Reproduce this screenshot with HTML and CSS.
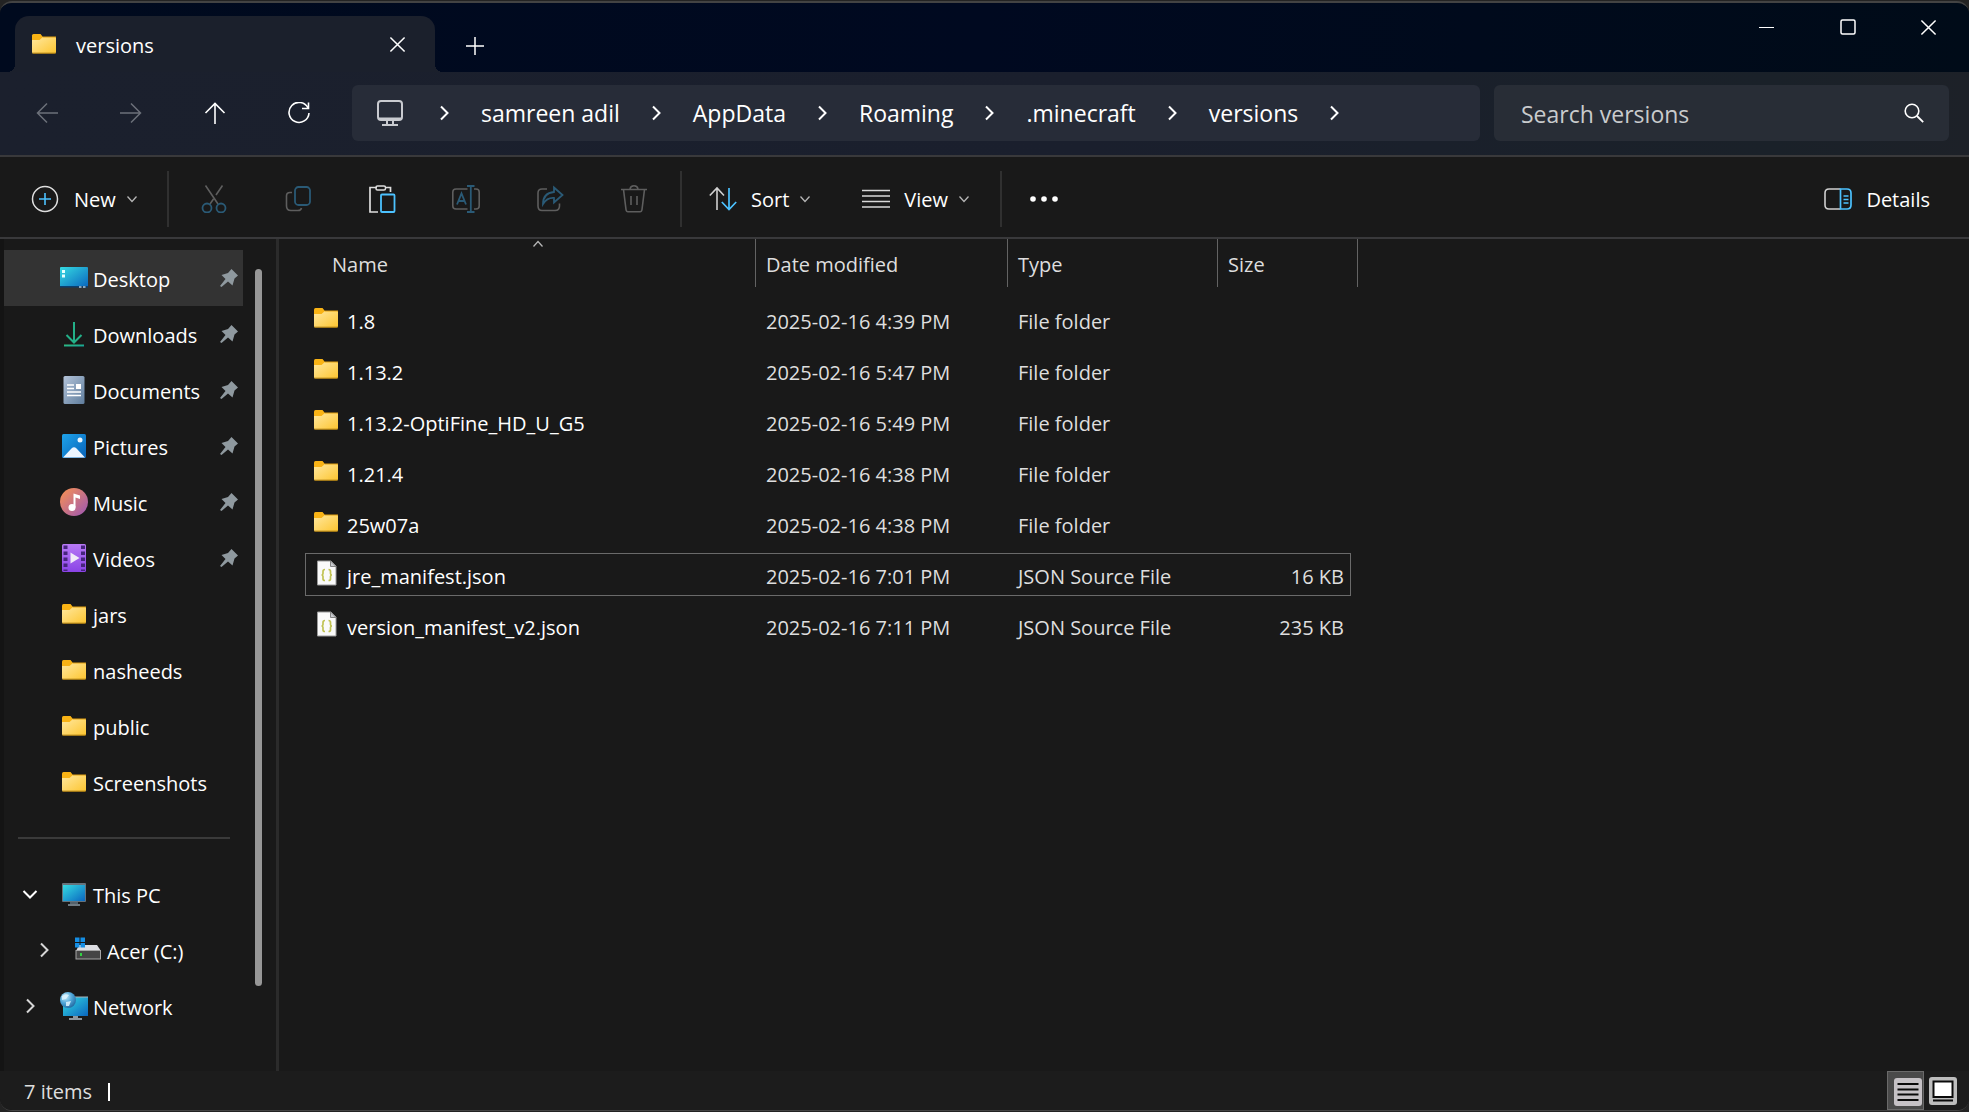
FILE: index.html
```html
<!DOCTYPE html>
<html lang="en">
<head>
<meta charset="utf-8">
<title>versions</title>
<link rel="stylesheet" href="styles.css">
</head>
<body>
<svg class="sprite" aria-hidden="true">
  <defs>
    <linearGradient id="gFolder" x1="0" y1="0" x2="1" y2="1"><stop offset="0" stop-color="#ffe8a0"/><stop offset="1" stop-color="#fdc52f"/></linearGradient>
    <linearGradient id="gScreen" x1="0" y1="0" x2="1" y2="1"><stop offset="0" stop-color="#35dbe2"/><stop offset="1" stop-color="#0a66bf"/></linearGradient>
    <linearGradient id="gDown" x1="0" y1="0" x2="1" y2="1"><stop offset="0" stop-color="#35c07f"/><stop offset="1" stop-color="#0fa09a"/></linearGradient>
    <linearGradient id="gDoc" x1="0" y1="0" x2="1" y2="1"><stop offset="0" stop-color="#b4c4da"/><stop offset="1" stop-color="#5f7d9c"/></linearGradient>
    <linearGradient id="gPic" x1="0" y1="0" x2="1" y2="1"><stop offset="0" stop-color="#1ea3ea"/><stop offset="1" stop-color="#0862b8"/></linearGradient>
    <linearGradient id="gMusic" x1="0" y1="0" x2="1" y2="1"><stop offset="0" stop-color="#fb9350"/><stop offset="1" stop-color="#9b55b5"/></linearGradient>
    <linearGradient id="gVideo" x1="0" y1="0" x2="0" y2="1"><stop offset="0" stop-color="#b87af5"/><stop offset="1" stop-color="#8a43e6"/></linearGradient>
    <radialGradient id="gGlobe" cx=".35" cy=".3" r=".8"><stop offset="0" stop-color="#c5ecfb"/><stop offset=".5" stop-color="#4fa6d8"/><stop offset="1" stop-color="#1c5f98"/></radialGradient>
  </defs>
  <symbol id="folder" viewBox="0 0 28 28"><path d="M2 5.500Q2 4 3.500 4H10.500L13 7V12H2Z" fill="#f9b315"/><path d="M2 10H9.500L13 7H25.500Q26 7 26 8V22Q26 23.500 24.500 23.500H3.500Q2 23.500 2 22Z" fill="url(#gFolder)"/><path d="M13 7H26" stroke="#e2a011"/><path d="M2.500 23.200H25.500" stroke="#a8790e" stroke-width="1"/></symbol>
  <symbol id="desktop" viewBox="0 0 28 28"><rect y="3" width="28" height="20" rx="1" fill="url(#gScreen)"/><path d="M0 22H28V23.500H0Z" fill="#0b3f70"/><path d="M2 6h3v3H2zM2 10.500h3v3H2z" fill="#e5ffff"/><path d="M19 22h2.500v2H19zM23 22h2.500v2H23z" fill="#8aa6bd"/></symbol>
  <symbol id="downloads" viewBox="0 0 28 28"><path d="M14 2V21M6.500 15L14 22.500L21.500 15" fill="none" stroke="#23b088" stroke-width="2"/><path d="M4 24.500H24V26.500H4Z" fill="url(#gDown)"/></symbol>
  <symbol id="documents" viewBox="0 0 28 28"><rect x="3.500" width="21" height="28" rx="1.500" fill="url(#gDoc)"/><path d="M7 9h7M7 12.500h7M7 16h14M7 19.500h14" stroke="#fff" stroke-width="1.500"/><path d="M16 8h5v5h-5z" fill="#fff"/></symbol>
  <symbol id="pictures" viewBox="0 0 28 28"><rect x="2" y="2" width="24" height="24" rx="1.500" fill="url(#gPic)"/><circle cx="20" cy="8" r="2.500" fill="#e9f6ff"/><path d="M3 25.500L11.500 16.500Q14 14 16.500 16.500L25 25.500Z" fill="#edf5ff"/></symbol>
  <symbol id="music" viewBox="0 0 28 28"><circle cx="14" cy="14" r="14" fill="url(#gMusic)"/><circle cx="12" cy="19.500" r="3.500" fill="#fff"/><path d="M13.500 5.500L20 7.500V11L15.500 9.500V19.500H13.500Z" fill="#fff"/></symbol>
  <symbol id="videos" viewBox="0 0 28 28"><rect x="2" width="24" height="28" rx="1.500" fill="url(#gVideo)"/><path d="M5.500 1.500V27M23 1.500V27" stroke="#46247c" stroke-width="4" stroke-dasharray="3.500 2.500"/><path d="M10.500 8.500L19.500 14L10.500 19.500Z" fill="#f1eaf8"/></symbol>
  <symbol id="thispc" viewBox="0 0 28 28"><path d="M10 20h8v4h-8z" fill="#53616b"/><path d="M8 24h12v2H8z" fill="#6f7a82"/><rect x="2" y="3" width="24" height="19" rx="1" fill="#66727b"/><rect x="3" y="5" width="22" height="16" fill="url(#gScreen)"/></symbol>
  <symbol id="drive" viewBox="0 0 28 28"><path d="M5 9H23L27 15H2Z" fill="#dcdde2"/><rect x="2" y="14.500" width="24.500" height="8.500" fill="#454545" stroke="#a6a6a6"/><rect x="6" y="17" width="2" height="3" fill="#32d243"/><path d="M1 1.500h4.500V6H1zM6.500 1.500H11V6H6.500zM1 7h4.500v4.500H1zM6.500 7H11v4.500H6.500z" fill="#158ee4"/></symbol>
  <symbol id="network" viewBox="0 0 28 28"><path d="M13 22h5v4h-5zM9 26h13v2H9z" fill="#8d979e"/><rect x="3" y="5" width="25" height="19" fill="url(#gScreen)"/><path d="M3 5H28" stroke="#abb5bb"/><circle cx="8" cy="8" r="8" fill="url(#gGlobe)"/><path d="M2 4Q5 1 9 3L6 7L2 8ZM6 10L11 9L9 14L6 14Z" fill="#dff5ff" opacity=".85"/></symbol>
  <symbol id="pin" viewBox="0 0 18 18"><path d="M11.500 0L18 6.500L14.500 9.500L12.500 16.500L8 12.500L1.500 18L0 17L5.500 10L1.500 6L8 4Z" fill="#8f999f"/></symbol>
  <symbol id="json" viewBox="0 0 28 28"><path d="M5.500 2H19L24 7V26H5.500Z" fill="#fafafa" stroke="#9a9a9a"/><path d="M18.500 2V7.500H24Z" fill="#c9ccd0" stroke="#858585"/><path d="M13 10.500Q11 10.500 11 12.500V14.500Q11 16 9.500 16Q11 16 11 17.500V20Q11 21.500 13 21.500M16.500 10.500Q18.500 10.500 18.500 12.500V14.500Q18.500 16 20 16Q18.500 16 18.500 17.500V20Q18.500 21.500 16.500 21.500" fill="none" stroke="#c0c253" stroke-width="1.700"/></symbol>
  <symbol id="chev" viewBox="0 0 16 16"><path d="M5 1.500L11.500 8L5 14.500" fill="none" stroke="currentColor" stroke-width="2"/></symbol>
  <symbol id="caret" viewBox="0 0 12 12"><path d="M1.500 3.500L6 8.500L10.500 3.500" fill="none" stroke="currentColor" stroke-width="1.300"/></symbol>
  <symbol id="x" viewBox="0 0 18 18"><path d="M1.500 1.500L16.500 16.500M16.500 1.500L1.500 16.500" stroke="currentColor" stroke-width="1.600"/></symbol>
</svg>

<div class="window">
  <header class="titlebar">
    <div class="tab">
      <svg class="ico"><use href="#folder"/></svg>
      <span class="tab-title">versions</span>
      <button class="tab-close" aria-label="Close tab"><svg width="17" height="17"><use href="#x"/></svg></button>
    </div>
    <button class="tab-new" aria-label="New tab"><svg width="18" height="18" viewBox="0 0 18 18"><path d="M9 0V18M0 9H18" stroke="currentColor" stroke-width="1.500"/></svg></button>
    <div class="controls">
      <button aria-label="Minimize"><svg width="16" height="16" viewBox="0 0 16 16"><path d="M0 8.500H15" stroke="currentColor"/></svg></button>
      <button aria-label="Maximize"><svg width="16" height="16" viewBox="0 0 16 16"><rect x="1" y="1" width="14" height="14" rx="1.500" fill="none" stroke="currentColor" stroke-width="1.500"/></svg></button>
      <button aria-label="Close"><svg width="17" height="17"><use href="#x"/></svg></button>
    </div>
  </header>

  <div class="navbar">
    <div class="nav-buttons">
      <button disabled aria-label="Back"><svg width="22" height="22" viewBox="0 0 22 22"><path d="M22 11H1.500M11 1.500L1.500 11L11 20.500" fill="none" stroke="currentColor" stroke-width="1.500"/></svg></button>
      <button disabled aria-label="Forward"><svg width="22" height="22" viewBox="0 0 22 22"><path d="M0 11H20.500M11 1.500L20.500 11L11 20.500" fill="none" stroke="currentColor" stroke-width="1.500"/></svg></button>
      <button aria-label="Up"><svg width="22" height="22" viewBox="0 0 22 22"><path d="M11 22V1.500M1.500 11L11 1.500L20.500 11" fill="none" stroke="currentColor" stroke-width="1.600"/></svg></button>
      <button aria-label="Refresh"><svg width="22" height="22" viewBox="0 0 22 22"><path d="M20 6A10 10 0 1 0 21 11M20.500 0.500V6.500H14" fill="none" stroke="currentColor" stroke-width="1.600"/></svg></button>
    </div>
    <nav class="address" aria-label="Address">
      <svg class="monitor" width="28" height="28" viewBox="0 0 28 28"><rect x="2" y="2" width="24" height="19" rx="3" fill="none" stroke="currentColor" stroke-width="2"/><path d="M3 19.500H25M11 21V25M17 21V25M6 26H22" stroke="currentColor" stroke-width="2"/></svg>
      <svg class="sep"><use href="#chev"/></svg><a href="#">samreen adil</a>
      <svg class="sep"><use href="#chev"/></svg><a href="#">AppData</a>
      <svg class="sep"><use href="#chev"/></svg><a href="#">Roaming</a>
      <svg class="sep"><use href="#chev"/></svg><a href="#">.minecraft</a>
      <svg class="sep"><use href="#chev"/></svg><a href="#">versions</a>
      <svg class="sep"><use href="#chev"/></svg>
    </nav>
    <label class="search">
      <input type="text" placeholder="Search versions" aria-label="Search versions">
      <svg width="20" height="20" viewBox="0 0 20 20"><circle cx="8" cy="8" r="6.800" fill="none" stroke="currentColor" stroke-width="1.600"/><path d="M13 13L19.200 19.200" stroke="currentColor" stroke-width="1.800"/></svg>
    </label>
  </div>

  <div class="toolbar">
    <button class="cmd cmd-new"><svg width="28" height="28" viewBox="0 0 28 28"><circle cx="14" cy="14" r="12.500" fill="none" stroke="#dedede" stroke-width="1.500"/><path d="M14 8V20M8 14H20" stroke="#4cc2ff" stroke-width="1.600"/></svg><span>New</span><svg class="caret"><use href="#caret"/></svg></button>
    <div class="group">
      <button class="tool" disabled aria-label="Cut"><svg viewBox="0 0 28 28"><path d="M5.500 0.500L18 19M22.500 0.500L16 10M13.500 14L10 19" fill="none" stroke="#5e5e5e" stroke-width="1.600"/><circle cx="7" cy="23" r="4.500" fill="none" stroke="#2a5a76" stroke-width="1.800"/><circle cx="21" cy="23" r="4.500" fill="none" stroke="#2a5a76" stroke-width="1.800"/></svg></button>
      <button class="tool" disabled aria-label="Copy"><svg viewBox="0 0 28 28"><rect x="11" y="2" width="15" height="18" rx="3.500" fill="none" stroke="#2a5a76" stroke-width="1.800"/><path d="M8 7.500H6Q2.500 7.500 2.500 11V21Q2.500 25.500 7 25.500H14Q17 25.500 17.500 23" fill="none" stroke="#5e5e5e" stroke-width="1.600"/></svg></button>
      <button class="tool" aria-label="Paste"><svg viewBox="0 0 28 28"><path d="M9 2.500H2V27H10M18 2.500H22.500V7" fill="none" stroke="#dedede" stroke-width="1.700"/><rect x="8" y="1" width="9.500" height="4" rx="1.500" fill="none" stroke="#dedede" stroke-width="1.500"/><rect x="13" y="9.500" width="13.500" height="17.500" rx="1" fill="none" stroke="#4cc2ff" stroke-width="1.800"/></svg></button>
      <button class="tool" disabled aria-label="Rename"><svg viewBox="0 0 28 28"><path d="M15.500 4H4Q.8 4 .8 7V21Q.8 24 4 24H15.500M22 4H24Q27.200 4 27.200 7V21Q27.200 24 24 24H22" fill="none" stroke="#5e5e5e" stroke-width="1.600"/><path d="M18.800 1V27M15 1H22.500M15 27H22.500M5 19.500L9.500 8.500L14 19.500M6.500 16H12.500" fill="none" stroke="#2a5a76" stroke-width="1.800"/></svg></button>
      <button class="tool" disabled aria-label="Share"><svg viewBox="0 0 28 28"><path d="M11 4H6Q2 4 2 8V21Q2 25.500 6 25.500H19Q23.500 25.500 23.500 21V18.500" fill="none" stroke="#5e5e5e" stroke-width="1.600"/><path d="M18 2.500L26.500 10L18 17.500V13Q11 12.500 7 19Q7 8 18 7Z" fill="none" stroke="#2a5a76" stroke-width="1.800"/></svg></button>
      <button class="tool" disabled aria-label="Delete"><svg viewBox="0 0 28 28"><path d="M1 4.500H27M3.500 4.500L6 24.500Q6.300 26.800 8 26.800H20Q21.700 26.800 22 24.500L24.500 4.500M10 4Q10.500 .8 14 .8T18 4M11 11V20M17 11V20" fill="none" stroke="#5e5e5e" stroke-width="1.600"/></svg></button>
    </div>
    <div class="group group-view">
      <button class="cmd cmd-sort"><svg width="28" height="28" viewBox="0 0 28 28"><path d="M8 25V3M.8 10.500L8 3L15 10.500" fill="none" stroke="#d0d0d0" stroke-width="1.600"/><path d="M20 3V24.500M12.800 17L20 24.500L27.200 17" fill="none" stroke="#4cc2ff" stroke-width="1.700"/></svg><span>Sort</span><svg class="caret"><use href="#caret"/></svg></button>
      <button class="cmd cmd-view"><svg width="28" height="28" viewBox="0 0 28 28"><path d="M0 5.500H28M0 11H28M0 16.500H28M0 22H28" stroke="#d8d8d8" stroke-width="1.600"/></svg><span>View</span><svg class="caret"><use href="#caret"/></svg></button>
    </div>
    <button class="more" aria-label="See more"><svg width="28" height="8" viewBox="0 0 28 8"><circle cx="3" cy="4" r="2.800" fill="#fff"/><circle cx="14" cy="4" r="2.800" fill="#fff"/><circle cx="25" cy="4" r="2.800" fill="#fff"/></svg></button>
    <button class="cmd cmd-details"><svg width="28" height="22" viewBox="0 0 28 22"><path d="M16.500 1H5Q1 1 1 5V17Q1 21 5 21H16.500" fill="none" stroke="#d0d0d0" stroke-width="1.600"/><path d="M16.500 1H23Q27 1 27 5V17Q27 21 23 21H16.500ZM19.500 8H24.500M19.500 11.500H24.500M19.500 15H24.500" fill="none" stroke="#4cc2ff" stroke-width="1.700"/></svg><span>Details</span></button>
  </div>

  <div class="body">
    <nav class="sidebar" aria-label="Folders">
      <ul class="tree">
        <li><a href="#" class="active"><svg class="ico"><use href="#desktop"/></svg><span>Desktop</span><svg class="pin"><use href="#pin"/></svg></a></li>
        <li><a href="#"><svg class="ico"><use href="#downloads"/></svg><span>Downloads</span><svg class="pin"><use href="#pin"/></svg></a></li>
        <li><a href="#"><svg class="ico"><use href="#documents"/></svg><span>Documents</span><svg class="pin"><use href="#pin"/></svg></a></li>
        <li><a href="#"><svg class="ico"><use href="#pictures"/></svg><span>Pictures</span><svg class="pin"><use href="#pin"/></svg></a></li>
        <li><a href="#"><svg class="ico"><use href="#music"/></svg><span>Music</span><svg class="pin"><use href="#pin"/></svg></a></li>
        <li><a href="#"><svg class="ico"><use href="#videos"/></svg><span>Videos</span><svg class="pin"><use href="#pin"/></svg></a></li>
        <li><a href="#"><svg class="ico"><use href="#folder"/></svg><span>jars</span></a></li>
        <li><a href="#"><svg class="ico"><use href="#folder"/></svg><span>nasheeds</span></a></li>
        <li><a href="#"><svg class="ico"><use href="#folder"/></svg><span>public</span></a></li>
        <li><a href="#"><svg class="ico"><use href="#folder"/></svg><span>Screenshots</span></a></li>
        <li class="divider" role="separator"></li>
        <li><a href="#"><svg class="twisty open"><use href="#chev"/></svg><svg class="ico"><use href="#thispc"/></svg><span>This PC</span></a></li>
        <li><a href="#" class="child"><svg class="twisty"><use href="#chev"/></svg><svg class="ico"><use href="#drive"/></svg><span>Acer (C:)</span></a></li>
        <li><a href="#"><svg class="twisty"><use href="#chev"/></svg><svg class="ico"><use href="#network"/></svg><span>Network</span></a></li>
      </ul>
      <div class="scroll"><div class="thumb"></div></div>
    </nav>
    <main class="files">
      <table>
        <colgroup><col class="c-name"><col class="c-date"><col class="c-type"><col class="c-size"></colgroup>
        <thead>
          <tr><th class="sorted">Name<svg class="sort-mark"><use href="#caret"/></svg></th><th>Date modified</th><th>Type</th><th>Size</th></tr>
        </thead>
        <tbody>
          <tr><td><div class="name"><svg class="ico"><use href="#folder"/></svg><span>1.8</span></div></td><td>2025-02-16 4:39 PM</td><td>File folder</td><td></td></tr>
          <tr><td><div class="name"><svg class="ico"><use href="#folder"/></svg><span>1.13.2</span></div></td><td>2025-02-16 5:47 PM</td><td>File folder</td><td></td></tr>
          <tr><td><div class="name"><svg class="ico"><use href="#folder"/></svg><span>1.13.2-OptiFine_HD_U_G5</span></div></td><td>2025-02-16 5:49 PM</td><td>File folder</td><td></td></tr>
          <tr><td><div class="name"><svg class="ico"><use href="#folder"/></svg><span>1.21.4</span></div></td><td>2025-02-16 4:38 PM</td><td>File folder</td><td></td></tr>
          <tr><td><div class="name"><svg class="ico"><use href="#folder"/></svg><span>25w07a</span></div></td><td>2025-02-16 4:38 PM</td><td>File folder</td><td></td></tr>
          <tr class="focused"><td><div class="name"><svg class="ico"><use href="#json"/></svg><span>jre_manifest.json</span></div></td><td>2025-02-16 7:01 PM</td><td>JSON Source File</td><td>16 KB</td></tr>
          <tr><td><div class="name"><svg class="ico"><use href="#json"/></svg><span>version_manifest_v2.json</span></div></td><td>2025-02-16 7:11 PM</td><td>JSON Source File</td><td>235 KB</td></tr>
        </tbody>
      </table>
    </main>
  </div>

  <footer class="status">
    <span class="count">7 items</span>
    <div class="views">
      <button class="on" aria-label="Details view"><svg width="28" height="28" viewBox="0 0 28 28"><rect width="28" height="28" rx="3" fill="#c6c2c6"/><path d="M3.500 6H24.500M3.500 11.500H24.500M3.500 16.500H24.500M3.500 22H24.500" stroke="#0a0a0a" stroke-width="2"/></svg></button>
      <button aria-label="Large thumbnails"><svg width="28" height="28" viewBox="0 0 28 28"><rect width="28" height="28" rx="3" fill="#bdbdbd"/><rect x="4.500" y="4.500" width="19" height="15.500" fill="#fff" stroke="#0a0a0a" stroke-width="2"/><path d="M4 23.500H24" stroke="#0a0a0a" stroke-width="2"/></svg></button>
    </div>
  </footer>
</div>
</body>
</html>
```

FILE: styles.css
```css
* { box-sizing: border-box; }

html, body { height: 100%; }

body {
  margin: 0;
  padding: 1px 0;
  background: #232323;
  color: #fff;
  font-family: "Open Sans", "Noto Sans", sans-serif;
  font-size: 20px;
  line-height: 26px;
}

svg { display: block; flex: none; }
.sprite { position: absolute; width: 0; height: 0; }

button {
  display: flex;
  align-items: center;
  justify-content: center;
  padding: 0;
  border: 0;
  background: none;
  color: inherit;
  font: inherit;
}

a { color: inherit; text-decoration: none; }

.ico { width: 28px; height: 28px; }

.window {
  display: flex;
  flex-direction: column;
  min-height: 100%;
  overflow: hidden;
  border-top: 2px solid #434343;
  border-bottom: 1px solid #434343;
  border-radius: 12px;
  background: #191919;
}

/* title bar */
.titlebar {
  display: flex;
  height: 69px;
  padding-left: 15px;
  background: linear-gradient(90deg, #000a1e, #000920 50%, #000b18);
}

.tab {
  position: relative;
  display: flex;
  align-items: center;
  width: 420px;
  margin-top: 13px;
  padding: 0 29px 0 15px;
  border-radius: 14px 14px 0 0;
  background: #1b202c;
}

.tab::before,
.tab::after {
  content: "";
  position: absolute;
  bottom: 0;
  width: 8px;
  height: 8px;
}
.tab::before { left: -8px; background: radial-gradient(circle at 0 0, transparent 8px, #1b202c 8px); }
.tab::after { right: -8px; background: radial-gradient(circle at 100% 0, transparent 8px, #1b202c 8px); }

.tab-title { flex: 1; padding: 4px 0 0 18px; }
.tab-new { width: 80px; padding-top: 16px; }

.controls { display: flex; height: 48px; margin-left: auto; }
.controls button { width: 81px; }

/* navigation row */
.navbar {
  display: grid;
  grid-template-columns: 333px minmax(0, 1128fr) minmax(0, 455fr);
  align-items: center;
  gap: 14px;
  height: 85px;
  padding: 0 20px 2px 5px;
  border-bottom: 2px solid #39393b;
  background: linear-gradient(90deg, #1b202d, #1a1f2d 55%, #1a2129 90%, #1d2128);
}

.nav-buttons { display: flex; }
.nav-buttons button { flex: none; width: 84px; height: 56px; }
.nav-buttons button:disabled { color: #6c7079; }

.address {
  display: flex;
  align-items: center;
  height: 56px;
  padding-left: 24px;
  border-radius: 6px;
  background: #272c38;
  font-size: 23px;
  line-height: 32px;
  white-space: nowrap;
}
.monitor { margin-right: 12px; color: #c9cbd0; }
.sep { width: 16px; height: 16px; margin: 0 29px 0 28px; }
.address > .monitor + .sep { margin-left: 20px; }

.search {
  display: flex;
  align-items: center;
  height: 56px;
  padding: 0 25px 0 27px;
  border-radius: 6px;
  background: #282d36;
}
.search input {
  flex: 1;
  min-width: 0;
  padding: 2px 0 0;
  border: 0;
  outline: 0;
  background: none;
  color: #fff;
  font: inherit;
  font-size: 23px;
  line-height: 32px;
}
.search input::placeholder { color: #c9cbcd; opacity: 1; }

/* command bar */
.toolbar {
  display: flex;
  align-items: center;
  height: 82px;
  padding: 4px 39px 0 0;
  border-bottom: 2px solid #39393b;
}
.cmd { height: 56px; justify-content: flex-start; }
.cmd span { padding-top: 2px; }
.caret { width: 12px; height: 12px; margin-left: 10px; color: #b5b5b5; }
.cmd-new { width: 167px; padding-left: 31px; gap: 15px; }
.cmd-new .caret { margin-left: -5px; }
.group {
  display: flex;
  height: 56px;
  border: solid #303030;
  border-width: 0 1px 0 2px;
  padding: 0 4px 0 3px;
}
.tool { width: 84px; }
.tool svg { width: 28px; height: 28px; }
.group-view { width: 321px; border-width: 0 2px 0 1px; padding-left: 27px; gap: 51px; }
.cmd-sort, .cmd-view { gap: 14px; }
.cmd-sort .caret, .cmd-view .caret { margin-left: -4px; }
.more { width: 84px; height: 56px; }
.cmd-details { gap: 14px; margin-left: auto; }

/* body */
.body { display: flex; flex: 1; }

.sidebar {
  display: flex;
  flex: none;
  width: 279px;
  padding-top: 11px;
  border-left: 4px solid #141414;
  border-right: 3px solid #2b2b2b;
}
.tree { width: 239px; margin: 0; padding: 0; list-style: none; }
.tree li { height: 56px; }
.tree a {
  display: flex;
  align-items: center;
  height: 56px;
  padding: 0 5px 0 56px;
}
.tree a.active { background: #333; }
.tree span { flex: 1; padding: 3px 0 0 5px; white-space: nowrap; }
.tree a.child { padding-left: 70px; }
.pin { width: 18px; height: 18px; }
.twisty { width: 16px; height: 16px; margin: 0 22px 0 -38px; color: #d6d6d6; }
.twisty.open { transform: rotate(90deg); color: #fff; }
.divider { display: flex; align-items: center; padding: 0 13px 0 14px; }
.divider::before { content: ""; flex: 1; height: 2px; background: #3a3a3a; }

.scroll { flex: 1; padding: 19px 0 85px 12px; }
.thumb { width: 7px; height: 100%; border-radius: 4px; background: #979797; }

.files { flex: 1; padding-left: 26px; }

table {
  width: 1046px;
  margin-top: -8px;
  border-collapse: separate;
  border-spacing: 0 8px;
  table-layout: fixed;
}
.c-name { width: 450px; }
.c-date { width: 252px; }
.c-type { width: 210px; }
.c-size { width: 134px; }

th {
  position: relative;
  height: 51px;
  padding: 13px 0 0 11px;
  color: #dedede;
  font-weight: 400;
  text-align: left;
  vertical-align: top;
}
th:first-child { padding-left: 27px; }
th::after {
  content: "";
  position: absolute;
  top: 0;
  right: -1px;
  width: 1px;
  height: 48px;
  background: #636363;
}
th:last-child::after { right: -7px; }
.sort-mark {
  position: absolute;
  top: -1px;
  left: calc(50% + 2px);
  width: 12px;
  height: 12px;
  transform: rotate(180deg);
  color: #b5b5b5;
}

td {
  height: 43px;
  padding: 4px 0 0 11px;
  border: solid transparent;
  border-width: 1px 0;
  color: #dedede;
  white-space: nowrap;
}
td:first-child { padding: 0 0 0 6px; border-left-width: 1px; color: #fff; }
td:last-child { padding-right: 6px; border-right-width: 1px; text-align: right; }
.focused td { border-color: #6a6a6a; }
.name { display: flex; align-items: center; gap: 7px; height: 36px; padding-bottom: 3px; }
.name span { padding-top: 8px; }

/* status bar */
.status {
  display: flex;
  align-items: center;
  justify-content: space-between;
  height: 39px;
  padding: 0 8px 0 24px;
  background: #1c1c1c;
  color: #dedede;
}
.count { display: flex; align-items: center; gap: 16px; padding-top: 3px; }
.count::after { content: ""; width: 2px; height: 18px; background: #fff; }
.views { display: flex; }
.views button { width: 37px; height: 39px; }
.views .on { padding: 3px 0 0 4px; border: 1px solid #6a6a6a; background: #4a4a4a; }
```
